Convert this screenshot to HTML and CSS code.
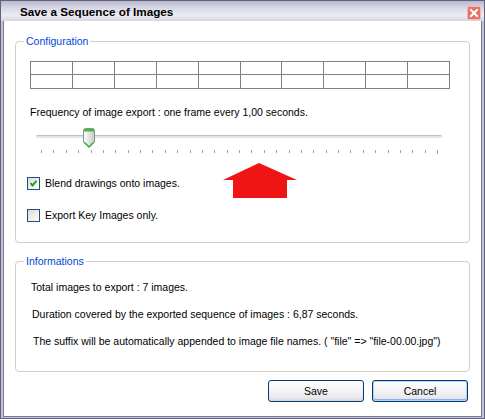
FILE: index.html
```html
<!DOCTYPE html>
<html>
<head>
<meta charset="utf-8">
<link rel="stylesheet" href="styles.css">
</head>
<body>
<div class="window">
  <div class="titlebar">
    <span class="title">Save a Sequence of Images</span>
    <span class="close">
      <svg width="14" height="14" viewBox="0 0 14 14">
        <rect x="0.5" y="0.5" width="13" height="13" rx="1.5" fill="#e4726a" stroke="#f3b7b0"/>
        <path d="M4 4 L10 10 M10 4 L4 10" stroke="#fff" stroke-width="2" stroke-linecap="square"/>
      </svg>
    </span>
  </div>
  <div class="frame">
    <div class="client">
      <fieldset class="group config">
        <legend>Configuration</legend>
        <div class="grid">
          <span></span><span></span><span></span><span></span><span></span><span></span><span></span><span></span><span></span><span></span>
          <span></span><span></span><span></span><span></span><span></span><span></span><span></span><span></span><span></span><span></span>
        </div>
        <p class="freq">Frequency of image export : one frame every 1,00 seconds.</p>
        <div class="slider">
          <div class="track"></div>
          <svg class="thumb" width="12" height="20" viewBox="0 0 12 20">
            <defs>
              <linearGradient id="tg" x1="0" y1="0" x2="1" y2="0">
                <stop offset="0" stop-color="#ffffff"/>
                <stop offset="1" stop-color="#c9c9c9"/>
              </linearGradient>
            </defs>
            <path d="M0.5 2.5 Q0.5 0.5 2.5 0.5 H9.5 Q11.5 0.5 11.5 2.5 V14 L6 19.5 L0.5 14 Z" fill="url(#tg)" stroke="#8e8f8f"/>
            <rect x="1" y="1" width="10" height="2.5" fill="#3fbf3f"/>
            <path d="M1.2 14.3 L6 18.8 L10.8 14.3" fill="none" stroke="#3cb83c" stroke-width="1.4"/>
          </svg>
          <div class="ticks">
            <i></i><i></i><i></i><i></i><i></i><i></i><i></i><i></i><i></i><i></i><i></i>
            <i></i><i></i><i></i><i></i><i></i><i></i><i></i><i></i><i></i><i></i><i></i>
            <i></i><i></i><i></i><i></i><i></i><i></i><i></i><i></i><i></i><i></i><i class="end"></i>
          </div>
        </div>
        <label class="check first">
          <span class="box">
            <svg width="11" height="11" viewBox="0 0 11 11">
              <path d="M2.5 5 L4.5 7.5 L8.5 2.8" fill="none" stroke="#21a121" stroke-width="2"/>
            </svg>
          </span>
          <span>Blend drawings onto images.</span>
        </label>
        <label class="check second">
          <span class="box"></span>
          <span>Export Key Images only.</span>
        </label>
      </fieldset>
      <fieldset class="group info">
        <legend>Informations</legend>
        <p class="line l1">Total images to export : 7 images.</p>
        <p class="line l2">Duration covered by the exported sequence of images : 6,87 seconds.</p>
        <p class="line l3">The suffix will be automatically appended to image file names. ( "file" =&gt; "file-00.00.jpg")</p>
      </fieldset>
      <div class="buttons">
        <button class="btn">Save</button>
        <button class="btn default">Cancel</button>
      </div>
    </div>
  </div>
  <svg class="arrow" width="75" height="36" viewBox="0 0 75 36">
    <polygon points="36,0 74,17 64,17 64,35 10,35 10,17 0,17" fill="#ef1515"/>
  </svg>
</div>
</body>
</html>
```
FILE: styles.css
```css
html, body {
  margin: 0;
  padding: 0;
  background: #ffffff;
}

.window {
  position: relative;
  width: 485px;
  height: 419px;
  box-sizing: border-box;
  border: 1px solid #62627e;
  background: #c2c2d4;
  display: flex;
  flex-direction: column;
  font-family: "Liberation Sans", Arial, sans-serif;
  font-size: 10.5px;
  color: #000;
}

.titlebar {
  height: 20px;
  flex: none;
  display: flex;
  align-items: center;
  justify-content: space-between;
  padding: 0 3px 0 19px;
  background: linear-gradient(#b8b8cd 0%, #d9d9e6 35%, #ececf3 70%, #d6d6e3 100%);
}

.title {
  font-weight: bold;
  font-size: 11.7px;
  padding-top: 1px;
}

.close {
  display: flex;
  margin-top: 3px;
}

.frame {
  flex: 1;
  display: flex;
  padding: 0 2px 1px 2px;
}

.client {
  flex: 1;
  background: #ffffff;
  border: 1px solid #7b7b98;
  border-top: none;
  display: flex;
  flex-direction: column;
}

.group {
  margin: 14px 11px 0 11px;
  padding: 0 0 0 11px;
  border: 1px solid #d0d0bf;
  border-radius: 4px;
  min-width: 0;
}

.group legend {
  color: #0046d5;
  line-height: 13px;
  padding: 0 2px;
  margin-left: -3px;
}

.config {
  padding-bottom: 20px;
}

.grid {
  margin: 13px 0 0 3px;
  width: 420px;
  box-sizing: border-box;
  display: grid;
  grid-template-columns: repeat(10, 1fr);
  grid-template-rows: 13px 14px;
  border-left: 1px solid #808080;
  border-top: 1px solid #808080;
}

.grid span {
  border-right: 1px solid #808080;
  border-bottom: 1px solid #808080;
}

.freq {
  margin: 17px 0 0 3px;
  line-height: 13px;
}

.slider {
  position: relative;
  margin: 7px 0 0 9px;
  width: 406px;
  height: 28px;
}

.track {
  position: absolute;
  left: 0;
  right: 0;
  top: 9px;
  height: 2px;
  background: #e6e6de;
  border-top: 1px solid #c2c2b6;
  border-radius: 2px;
}

.thumb {
  position: absolute;
  left: 47px;
  top: 2px;
}

.ticks {
  position: absolute;
  left: 5px;
  top: 24px;
  width: 397px;
  display: flex;
  justify-content: space-between;
  align-items: flex-start;
}

.ticks i {
  display: block;
  width: 1px;
  height: 3px;
  background: #a0a0a0;
}

.ticks i.end {
  height: 4px;
}

.check {
  display: flex;
  align-items: center;
  gap: 5px;
  height: 13px;
  line-height: 13px;
}

.check.first {
  margin-top: 23px;
}

.check.second {
  margin-top: 19px;
}

.box {
  width: 13px;
  height: 13px;
  box-sizing: border-box;
  border: 1px solid #1c5180;
  background: linear-gradient(135deg, #dcdcd5 0%, #f4f4f0 70%, #ffffff 100%);
  display: flex;
  align-items: center;
  justify-content: center;
}

.info {
  margin-top: 12px;
  padding-bottom: 23px;
}

.line {
  margin: 14px 0 0 4px;
  line-height: 13px;
}

.info legend + .line {
  margin-top: 13px;
}

.line.l2 {
  margin-left: 5px;
}

.line.l3 {
  margin-left: 6px;
}

.buttons {
  display: flex;
  justify-content: flex-end;
  gap: 8px;
  margin-top: 8px;
  padding-right: 13px;
}

.btn {
  width: 96px;
  height: 22px;
  font-family: "Liberation Sans", Arial, sans-serif;
  font-size: 10.5px;
  color: #000;
  border: 1px solid #003c74;
  border-radius: 3px;
  background: linear-gradient(#ffffff 0%, #f4f4f6 50%, #e6e6ec 85%, #d6d6de 100%);
  padding: 0;
}

.btn.default {
  box-shadow: inset 0 0 0 1px #b9d1fa, inset 0 -1px 0 1px #8fb0ea;
}

.arrow {
  position: absolute;
  left: 222px;
  top: 162px;
}
```
